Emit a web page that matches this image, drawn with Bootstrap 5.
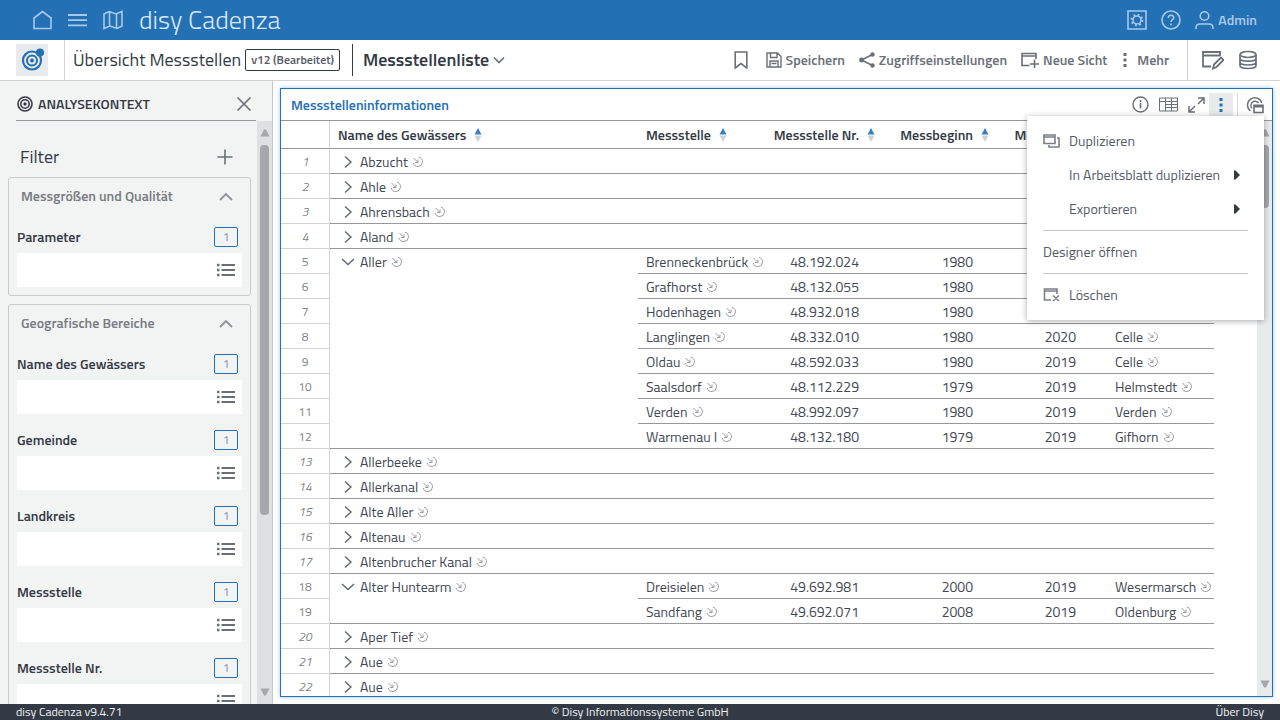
<!DOCTYPE html>
<html lang="de">
<head>
<meta charset="utf-8">
<meta name="viewport" content="width=device-width, initial-scale=1">
<title>disy Cadenza – Messstellenliste</title>
<link href="https://cdn.jsdelivr.net/npm/bootstrap@5.3.0/dist/css/bootstrap.min.css" rel="stylesheet">
<style>
:root{--blue:#2470b5;--ink:#343a45;--grey:#6a6f78;--line:#96989d;--soft:#d2d3d6}
body{font-family:"Titillium Web",Roboto,"Open Sans",sans-serif;font-size:14px;line-height:20px;color:var(--ink)}
svg{fill:none;stroke:currentColor;stroke-width:1.6;flex:none;display:block}
a{color:inherit;text-decoration:none}
.plain{background:none;border:0;padding:0;color:inherit;font-weight:inherit;display:flex;align-items:center}
.topbar{height:40px;background:var(--blue);color:#a9c9e8;padding:0 23px 0 33px}
.topbar .right-nav{gap:14px;font-weight:600}
.brandname{font-size:26px;font-weight:300;color:#d9e8f6;line-height:40px}
.toolbar{height:41px;border-bottom:1px solid var(--soft);background:#fff;color:var(--grey)}
.logo-cell{border-right:1px solid var(--soft);width:65px}
.logo-box{width:32px;height:32px;background:#e9eaec;color:var(--blue)}
.book{font-size:18px;color:var(--ink)}
.version{border:1px solid var(--ink);border-radius:2px;font-size:12px;font-weight:600;height:22px;line-height:20px;padding:0 5px;color:#555b66}
.sheet{border-left:1px solid var(--ink);height:32px;padding-left:10px;font-size:18px;font-weight:600;color:var(--ink)}
.actions{font-weight:600;gap:14px;padding-right:18px}
.tools{border-left:1px solid var(--soft);gap:14px;padding:0 22px 0 14px}
.sidebar{width:273px;background:#f2f4f4;border-right:1px solid #c6c8cb}
.side-head{height:40px;margin:0 16px;padding-top:6px;border-bottom:1px solid var(--line);font-weight:600}
.filter-title{font-size:18px;height:56px;padding:25px 23px 0 20px}
.filter-box{border:1px solid #c9cbcd;border-radius:3px;margin:0 6px 8px 8px;padding:0 8px 8px}
.filter-box h3{font-size:14px;font-weight:600;height:38px;line-height:20px;margin:0;padding:0 9px 2px 4px;color:#777b82}
.field-name{height:37px;padding:4px 4px 0 0;font-weight:600}
.count{width:24px;height:20px;border:1px solid var(--blue);border-radius:2px;background:none;color:#7c8fb0;font-size:12px;line-height:18px;padding:0}
.field-box{background:#fff;height:34px;padding:0 6px;color:var(--grey)}
.field-box input{border:0;background:none;outline:0;min-width:0;height:32px}
.field + .field{margin-top:5px}
.scroller{width:15px;background:#dfe0e2;color:#a5a8ab}
.table-scroller{background:#e9eaec}
.scroller .thumb{width:9px;border-radius:4px;background:#a5a8ab}
.scroller svg{fill:currentColor;stroke:none}
.view{padding:7px}
.panel{border:1px solid var(--blue);box-shadow:0 0 4px #9cc4ee;background:#fff}
.panel-head{height:32px;border-bottom:1px solid var(--line);color:var(--grey);padding-left:10px}
.panel-head h2{font-size:14px;font-weight:600;line-height:20px;color:var(--blue);margin:0}
.spaced{margin:0 10px}
.more-btn{width:24px;height:24px;background:#e9eaec;color:var(--blue)}
.grid{table-layout:fixed;width:933px;border-collapse:separate;border-spacing:0}
.grid th,.grid td{height:25px;padding:3px 8px 0;border-bottom:1px solid var(--line);white-space:nowrap;font-weight:400;line-height:20px;vertical-align:top}
.grid td{color:#434852}
.grid thead th{height:28px;font-weight:600;padding-top:4px}
.grid .no{border-right:1px solid var(--soft);border-bottom-color:var(--soft);text-align:center;font-size:12px;color:#7d8086}
.grid thead .no{border-bottom-color:var(--line)}
.grid .shut{font-style:italic}
.grid .num{text-align:right;padding-right:31px}
.grid svg{display:inline-block}
.grid .ref{color:#9a9ca1;margin-left:1px;vertical-align:-1px}
.grid .twist{vertical-align:-2px;margin:0 5px 0 3px;color:#62676f}
.grid .sort{stroke:none;margin:0 -16px 0 8px;vertical-align:-2px}
.dropdown-menu.ctx{top:27px;right:8px;left:auto;width:237px;padding:8px 16px;border:0;border-radius:0;box-shadow:0 1px 6px #0005;font-size:14px;z-index:5}
.ctx .dropdown-item{height:34px;padding:0;color:#555b65;background:none}
.ctx .ico{width:26px;color:#7b7f86}
.ctx hr{margin:4px 0;border-top:1px solid #c4c5c8;opacity:1}
.foot{height:16px;background:var(--ink);color:#f0f1f3;font-size:12px;line-height:16px}
</style>
</head>
<body class="vh-100 d-flex flex-column overflow-hidden">
<svg width="0" height="0" class="position-absolute" aria-hidden="true">
  <symbol id="list" viewBox="0 0 20 14"><path d="M5.500 2H19M5.500 7H19M5.500 12H19" stroke-width="2"/><path d="M1 2h2.500M1 7h2.500M1 12h2.500" stroke-width="2.500"/></symbol>
  <symbol id="up" viewBox="0 0 14 9"><path d="M1 8l6-6 6 6" stroke-width="1.800"/></symbol>
  <symbol id="ref" viewBox="0 0 12 12"><path d="M7 1.300A4.700 4.700 0 1 1 1.200 7M1.500 2L6 6.500M3 6.500h3v-3" stroke-width="1"/></symbol>
  <symbol id="closed" viewBox="0 0 14 14"><path d="M4 1.500L10 7l-6 5.500" stroke-width="1.400"/></symbol>
  <symbol id="open" viewBox="0 0 14 14"><path d="M1 4l6 5.500L13 4" stroke-width="1.400"/></symbol>
  <symbol id="sort" viewBox="0 0 8 14"><path d="M4 0l3.500 6.500h-7z" fill="#3a7fc4"/><path d="M4 14L.5 7.500h7z" fill="#d0d1d3"/></symbol>
  <symbol id="triUp" viewBox="0 0 10 8"><path d="M4 .5h2L9.500 7.500h-9z"/></symbol>
  <symbol id="triDown" viewBox="0 0 10 8"><path d="M4 7.500h2L9.500.5h-9z"/></symbol>
</svg>

<header class="topbar d-flex align-items-center flex-shrink-0">
  <nav class="d-flex align-items-center gap-3">
    <a href="#" aria-label="Start"><svg width="19" height="20" viewBox="0 0 19 20"><path d="M1 18.500V8L9.500 1.500 18 8v10.500z"/></svg></a>
    <a href="#" aria-label="Menü"><svg width="19" height="20" viewBox="0 0 19 20"><path d="M0 5h19M0 10.200h19M0 15.400h19" stroke-width="1.800"/></svg></a>
    <a href="#" aria-label="Karte"><svg width="20" height="20" viewBox="0 0 20 20"><path d="M1 4l5-2.500L13 4l6-2.500V16l-5 2.500L7 16l-6 2.500zM6.500 2v14M13.500 4v14"/></svg></a>
  </nav>
  <a href="#" class="brandname ms-3">disy Cadenza</a>
  <nav class="right-nav d-flex align-items-center ms-auto">
    <a href="#" aria-label="Verwaltung"><svg width="20" height="20" viewBox="0 0 20 20"><path d="M1 1h18v18H1z"/><circle cx="10" cy="10" r="4"/><circle cx="10" cy="10" r="5.400" stroke-width="2" stroke-dasharray="1.800 2.440"/></svg></a>
    <a href="#" aria-label="Hilfe"><svg width="20" height="20" viewBox="0 0 20 20"><circle cx="10" cy="10" r="9"/><path d="M7.300 8c0-3.600 5.400-3.500 5.400-.3 0 2-2.700 2-2.700 4.300M10 13.500v2"/></svg></a>
    <a href="#" class="d-flex align-items-center gap-1"><svg width="19" height="20" viewBox="0 0 19 20"><circle cx="9.500" cy="6" r="4.300"/><path d="M1 19v-1q0-4 4-4h9q4 0 4 4v1"/></svg>Admin</a>
  </nav>
</header>

<div class="toolbar d-flex align-items-center flex-shrink-0">
  <div class="logo-cell align-self-stretch d-flex align-items-center ps-3">
    <a href="#" class="logo-box d-flex align-items-center justify-content-center" aria-label="Analysekontext"><svg width="24" height="24" viewBox="0 0 24 24"><circle cx="12" cy="12.500" r="9" stroke-width="2.200"/><circle cx="12" cy="12.500" r="5" stroke-width="2"/><circle cx="12" cy="12.500" r="2" fill="currentColor" stroke="none"/><circle cx="20" cy="4.500" r="4" fill="currentColor" stroke="none"/></svg></a>
  </div>
  <div class="book ms-2">Übersicht Messstellen</div>
  <div class="version ms-1">v12 (Bearbeitet)</div>
  <button type="button" class="plain ms-2 ps-1"><span class="sheet d-flex align-items-center gap-1">Messstellenliste<svg width="12" height="8" viewBox="0 0 12 8" color="#6a6f78"><path d="M1 1.500l5 5 5-5"/></svg></span></button>
  <div class="actions d-flex align-items-center ms-auto">
    <button type="button" class="plain me-1" aria-label="Lesezeichen"><svg width="14" height="18" viewBox="0 0 14 18"><path d="M1.200 1h11.600v16L7 12.500 1.200 17z"/></svg></button>
    <button type="button" class="plain gap-1"><svg width="16" height="16" viewBox="0 0 16 16"><path d="M1 1h10.500L15 4.500V15H1zM4.500 1v4.500H11V1M4 15V9h8v6M5.500 11.500h5" stroke-width="1.400"/></svg>Speichern</button>
    <button type="button" class="plain gap-1"><svg width="16" height="16" viewBox="0 0 16 16"><path d="M13.500 2.500L2.500 8l11 5.500"/><g fill="currentColor" stroke="none"><circle cx="13.500" cy="2.500" r="2.200"/><circle cx="2.500" cy="8" r="2.400"/><circle cx="13.500" cy="13.500" r="2.200"/></g></svg>Zugriffseinstellungen</button>
    <button type="button" class="plain gap-1"><svg width="18" height="16" viewBox="0 0 18 16"><path d="M8.500 13.500H1V1.500h14V7M1 4h14M13.500 7.500V16M9 12h9"/></svg>Neue Sicht</button>
    <button type="button" class="plain gap-2"><svg width="8" height="16" viewBox="0 0 8 16"><path d="M2.500 1h3v3h-3zM2.500 6.500h3v3h-3zM2.500 12h3v3h-3z" fill="currentColor" stroke="none"/></svg>Mehr</button>
  </div>
  <div class="tools align-self-stretch d-flex align-items-center">
    <button type="button" class="plain" aria-label="Bearbeiten"><svg width="22" height="20" viewBox="0 0 22 20"><path d="M9 16.500H1V2h17v4M1 5.500h17M11 18.500l1-4 7-7 2.500 2.500-7 7z" stroke-width="1.800"/></svg></button>
    <button type="button" class="plain" aria-label="Daten"><svg width="20" height="20" viewBox="0 0 20 20"><ellipse cx="10" cy="4.500" rx="8" ry="3"/><path d="M2 4.500v11c0 4 16 4 16 0v-11M2 8.200c0 4 16 4 16 0M2 12c0 4 16 4 16 0" stroke-width="1.700"/></svg></button>
  </div>
</div>

<main class="d-flex flex-grow-1 overflow-hidden">
  <aside class="sidebar flex-shrink-0 d-flex flex-column">
    <div class="side-head d-flex align-items-center flex-shrink-0">
      <svg width="18" height="18" viewBox="0 0 18 18"><circle cx="9" cy="9" r="7"/><circle cx="9" cy="9" r="4.200"/><circle cx="9" cy="9" r="1.700" fill="currentColor" stroke="none"/></svg>
      <span class="ms-1">ANALYSEKONTEXT</span>
      <button type="button" class="plain ms-auto me-1" aria-label="Schließen"><svg width="16" height="16" viewBox="0 0 16 16" color="#6a6f78"><path d="M1.500 1.500l13 13M14.500 1.500l-13 13"/></svg></button>
    </div>
    <div class="d-flex flex-grow-1 overflow-hidden">
      <div class="flex-grow-1 overflow-hidden">
        <div class="filter-title d-flex align-items-start justify-content-between lh-sm">
          <span>Filter</span>
          <button type="button" class="plain" aria-label="Filter hinzufügen"><svg width="18" height="22" viewBox="0 0 18 22" color="#6a6f78"><path d="M9 3.500v15M1.500 11h15"/></svg></button>
        </div>
        <section class="filter-box">
          <h3 class="d-flex justify-content-between align-items-center"><span>Messgrößen und Qualität</span><svg width="14" height="9" color="#8f9297"><use href="#up"/></svg></h3>
          <div class="field" data-label="Parameter"></div>
        </section>
        <section class="filter-box">
          <h3 class="d-flex justify-content-between align-items-center"><span>Geografische Bereiche</span><svg width="14" height="9" color="#8f9297"><use href="#up"/></svg></h3>
          <div class="field" data-label="Name des Gewässers"></div>
          <div class="field" data-label="Gemeinde"></div>
          <div class="field" data-label="Landkreis"></div>
          <div class="field" data-label="Messstelle"></div>
          <div class="field" data-label="Messstelle Nr."></div>
        </section>
      </div>
      <div class="scroller d-flex flex-column align-items-center justify-content-between flex-shrink-0 py-2">
        <div class="d-flex flex-column align-items-center gap-2 h-75"><svg width="10" height="8"><use href="#triUp"/></svg><div class="thumb" style="height:87%"></div></div>
        <svg width="10" height="8"><use href="#triDown"/></svg>
      </div>
    </div>
  </aside>

  <div class="view flex-grow-1 d-flex overflow-hidden">
    <section class="panel flex-grow-1 d-flex flex-column position-relative">
      <div class="panel-head d-flex align-items-center flex-shrink-0">
        <h2>Messstelleninformationen</h2>
        <div class="d-flex align-items-center ms-auto pe-2">
          <button type="button" class="plain" aria-label="Information"><svg width="17" height="17" viewBox="0 0 17 17"><circle cx="8.500" cy="8.500" r="7.500" stroke-width="1.400"/><path d="M8.500 7v5.500M8.500 4v2"/></svg></button>
          <button type="button" class="plain spaced" aria-label="Tabelle"><svg width="19" height="15" viewBox="0 0 19 15"><path d="M.5 1h18v13H.5zM6.500 1v13M12.500 1v13M.5 4.500h18M6.500 7.500h12M6.500 10.500h12" stroke-width="1"/></svg></button>
          <button type="button" class="plain me-1" aria-label="Maximieren"><svg width="17" height="16" viewBox="0 0 17 16"><path d="M10 1h6v6M16 1l-6 6M1 9v6h6M1 15l6-6" stroke-width="1.500"/></svg></button>
          <button type="button" class="plain more-btn justify-content-center" aria-label="Mehr" aria-expanded="true"><svg width="4" height="14" viewBox="0 0 4 14"><path d="M.5 0h3v3h-3zM.5 5.500h3v3h-3zM.5 11h3v3h-3z" fill="currentColor" stroke="none"/></svg></button>
          <span class="vr mx-1"></span>
          <button type="button" class="plain ps-1" aria-label="Verknüpfung"><svg width="18" height="18" viewBox="0 0 18 18"><path d="M4.500 15A7.300 7.300 0 1 1 15.800 7M6 12.300A4.200 4.200 0 1 1 12.500 7" stroke-width="1.400"/><path d="M8 9.300h9V16.500H8zM8 10.800h9"/></svg></button>
        </div>
      </div>
      <div class="d-flex flex-grow-1 overflow-hidden">
        <div class="flex-grow-1 overflow-hidden">
          <table class="grid">
            <colgroup><col style="width:49px"><col style="width:308px"><col style="width:126px"><col style="width:126px"><col style="width:114px"><col style="width:103px"><col style="width:107px"></colgroup>
            <thead><tr>
              <th class="no"></th>
              <th>Name des Gewässers<svg class="sort" width="8" height="14"><use href="#sort"/></svg></th>
              <th>Messstelle<svg class="sort" width="8" height="14"><use href="#sort"/></svg></th>
              <th class="num">Messstelle Nr.<svg class="sort" width="8" height="14"><use href="#sort"/></svg></th>
              <th class="num">Messbeginn<svg class="sort" width="8" height="14"><use href="#sort"/></svg></th>
              <th class="num">Messende<svg class="sort" width="8" height="14"><use href="#sort"/></svg></th>
              <th>Landkreis</th>
            </tr></thead>
            <tbody id="rows"></tbody>
          </table>
        </div>
        <div class="scroller table-scroller d-flex flex-column align-items-center justify-content-between flex-shrink-0 py-2">
          <div class="d-flex flex-column align-items-center gap-2 h-75"><svg width="10" height="8"><use href="#triUp"/></svg><div class="thumb" style="height:15%"></div></div>
          <svg width="10" height="8"><use href="#triDown"/></svg>
        </div>
      </div>
      <div class="dropdown-menu ctx show">
        <a href="#" class="dropdown-item d-flex align-items-center"><span class="ico"><svg width="17" height="14" viewBox="0 0 17 14"><path d="M1 1h11v8.500H1zM1 3h11M14 4h2v9H6v-2"/></svg></span>Duplizieren</a>
        <a href="#" class="dropdown-item d-flex align-items-center"><span class="ico"></span>In Arbeitsblatt duplizieren<svg class="ms-auto me-2" width="6" height="10" viewBox="0 0 6 10"><path d="M0 .5h1.500L6 5 1.500 9.500H0z" fill="#343a45" stroke="none"/></svg></a>
        <a href="#" class="dropdown-item d-flex align-items-center"><span class="ico"></span>Exportieren<svg class="ms-auto me-2" width="6" height="10" viewBox="0 0 6 10"><path d="M0 .5h1.500L6 5 1.500 9.500H0z" fill="#343a45" stroke="none"/></svg></a>
        <hr>
        <a href="#" class="dropdown-item d-flex align-items-center">Designer öffnen</a>
        <hr>
        <a href="#" class="dropdown-item d-flex align-items-center"><span class="ico"><svg width="17" height="14" viewBox="0 0 17 14"><path d="M8 12H1.500V1H14v5M1.500 3H14M10 7.500l6 5.500M16 7.500l-6 5.500"/></svg></span>Löschen</a>
      </div>
    </section>
  </div>
</main>

<footer class="foot d-flex px-3 flex-shrink-0">
  <span class="col">disy Cadenza v9.4.71</span><span>© Disy Informationssysteme GmbH</span><a href="#" class="col text-end">Über Disy</a>
</footer>

<script>
const ref = '<svg class="ref" width="12" height="12"><use href="#ref"/></svg>';
const twist = s => `<svg class="twist" width="14" height="14"><use href="#${s}"/></svg>`;
const data = [
  ['Abzucht'], ['Ahle'], ['Ahrensbach'], ['Aland'],
  ['Aller', [
    ['Brenneckenbrück', '48.192.024', 1980, '', ''],
    ['Grafhorst', '48.132.055', 1980, '', ''],
    ['Hodenhagen', '48.932.018', 1980, '', ''],
    ['Langlingen', '48.332.010', 1980, 2020, 'Celle'],
    ['Oldau', '48.592.033', 1980, 2019, 'Celle'],
    ['Saalsdorf', '48.112.229', 1979, 2019, 'Helmstedt'],
    ['Verden', '48.992.097', 1980, 2019, 'Verden'],
    ['Warmenau I', '48.132.180', 1979, 2019, 'Gifhorn']]],
  ['Allerbeeke'], ['Allerkanal'], ['Alte Aller'], ['Altenau'], ['Altenbrucher Kanal'],
  ['Alter Huntearm', [
    ['Dreisielen', '49.692.981', 2000, 2019, 'Wesermarsch'],
    ['Sandfang', '49.692.071', 2008, 2019, 'Oldenburg']]],
  ['Aper Tief'], ['Aue'], ['Aue']
];
let n = 0, html = '';
for (const [name, sites] of data) {
  if (!sites) {
    html += `<tr><td class="no shut">${++n}</td><td colspan="6">${twist('closed')}${name} ${ref}</td></tr>`;
    continue;
  }
  sites.forEach(([site, nr, from, to, area], i) => {
    const head = i ? '' : `<td rowspan="${sites.length}">${twist('open')}${name} ${ref}</td>`;
    html += `<tr><td class="no">${++n}</td>${head}<td>${site} ${ref}</td><td class="num">${nr}</td><td class="num">${from}</td><td class="num">${to}</td><td>${area && area + ' ' + ref}</td></tr>`;
  });
}
document.getElementById('rows').innerHTML = html;
document.querySelectorAll('.field').forEach((f, i) => {
  f.innerHTML = `<div class="field-name d-flex align-items-center justify-content-between"><label for="f${i}">${f.dataset.label}</label><button type="button" class="count">1</button></div>
  <div class="field-box d-flex align-items-center"><input class="flex-grow-1" id="f${i}" type="text"><button type="button" class="plain" aria-label="Auswahlliste"><svg width="20" height="14"><use href="#list"/></svg></button></div>`;
});
</script>
<script src="https://cdn.jsdelivr.net/npm/bootstrap@5.3.0/dist/js/bootstrap.bundle.min.js"></script>
</body>
</html>
